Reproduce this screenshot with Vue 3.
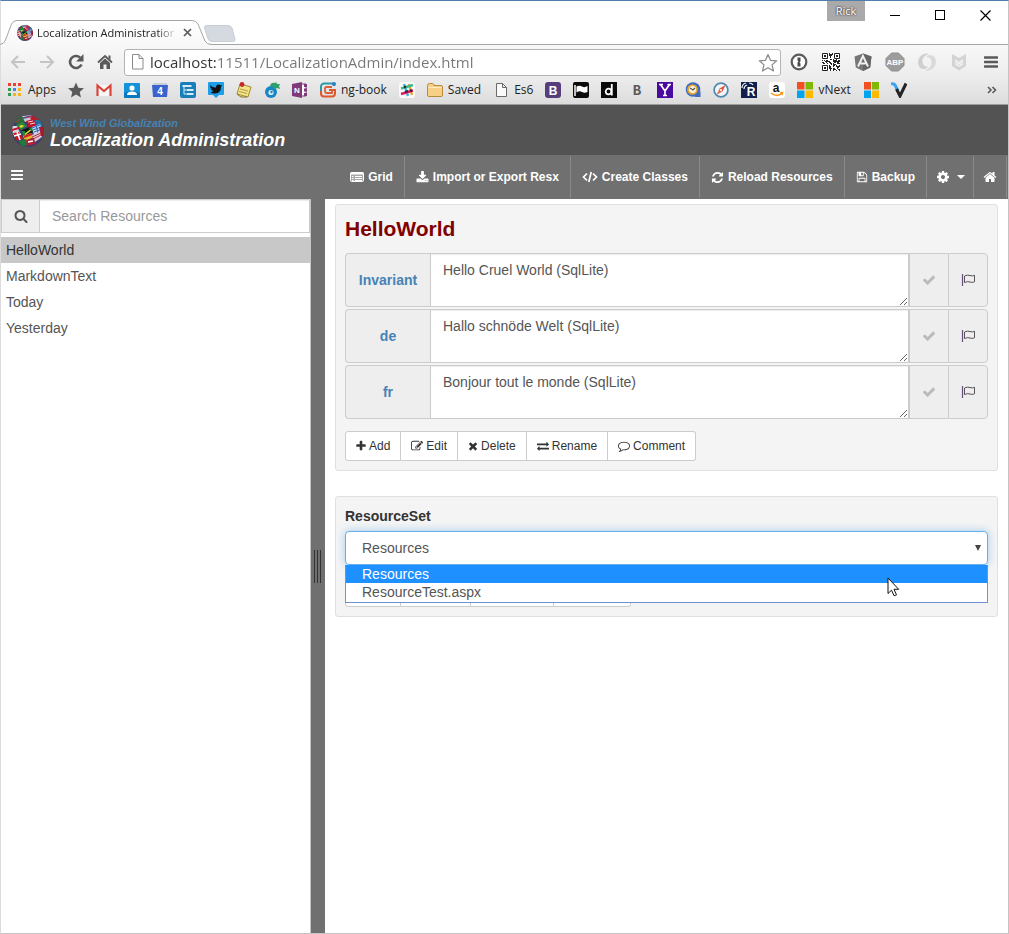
<script setup>
import { ref } from 'vue'

const fa = {
  bars: 'M1664 1344v128q0 26-19 45t-45 19H192q-26 0-45-19t-19-45v-128q0-26 19-45t45-19h1408q26 0 45 19t19 45zm0-512v128q0 26-19 45t-45 19H192q-26 0-45-19t-19-45V832q0-26 19-45t45-19h1408q26 0 45 19t19 45zm0-512v128q0 26-19 45t-45 19H192q-26 0-45-19t-19-45V320q0-26 19-45t45-19h1408q26 0 45 19t19 45z',
  search: 'M1216 832q0-185-131.5-316.5t-316.5-131.5-316.5 131.5-131.5 316.5 131.5 316.5 316.5 131.5 316.5-131.5 131.5-316.5zm512 832q0 52-38 90t-90 38q-54 0-90-38l-343-342q-179 124-399 124-143 0-273.5-55.5t-225-150-150-225-55.5-273.5 55.5-273.5 150-225 225-150 273.5-55.5 273.5 55.5 225 150 150 225 55.5 273.5q0 220-124 399l343 343q37 37 37 90z',
  plus: 'M1600 736v192q0 40-28 68t-68 28h-416v416q0 40-28 68t-68 28h-192q-40 0-68-28t-28-68v-416h-416q-40 0-68-28t-28-68v-192q0-40 28-68t68-28h416v-416q0-40 28-68t68-28h192q40 0 68 28t28 68v416h416q40 0 68 28t28 68z',
  check: 'M1671 566q0 40-28 68l-724 724-136 136q-28 28-68 28t-68-28l-136-136-362-362q-28-28-28-68t28-68l136-136q28-28 68-28t68 28l294 295 656-657q28-28 68-28t68 28l136 136q28 28 28 68z',
  times: 'M1490 1322q0 40-28 68l-136 136q-28 28-68 28t-68-28l-294-294-294 294q-28 28-68 28t-68-28l-136-136q-28-28-28-68t28-68l294-294-294-294q-28-28-28-68t28-68l136-136q28-28 68-28t68 28l294 294 294-294q28-28 68-28t68 28l136 136q28 28 28 68t-28 68l-294 294 294 294q28 28 28 68z',
  home: 'M1472 992v480q0 26-19 45t-45 19h-384v-384h-256v384h-384q-26 0-45-19t-19-45v-480q0-1 .5-3t.5-3l575-474 575 474q1 2 1 6zm223-69l-62 74q-8 9-21 11h-3q-13 0-21-7l-692-577-692 577q-12 8-24 7-13-2-21-11l-62-74q-8-10-7-23.5t11-21.5l719-599q32-26 76-26t76 26l244 204v-195q0-14 9-23t23-9h192q14 0 23 9t9 23v408l219 182q10 8 11 21.5t-7 23.5z',
  download: 'M1344 1344q0-26-19-45t-45-19-45 19-19 45 19 45 45 19 45-19 19-45zm256 0q0-26-19-45t-45-19-45 19-19 45 19 45 45 19 45-19 19-45zm128-224v320q0 40-28 68t-68 28h-1472q-40 0-68-28t-28-68v-320q0-40 28-68t68-28h465l135 136q58 56 136 56t136-56l136-136h464q40 0 68 28t28 68zm-325-569q17 41-14 70l-448 448q-18 19-45 19t-45-19l-448-448q-31-29-14-70 17-39 59-39h256v-448q0-26 19-45t45-19h256q26 0 45 19t19 45v448h256q42 0 59 39z',
  cog: 'M1152 896q0-106-75-181t-181-75-181 75-75 181 75 181 181 75 181-75 75-181zm512-109v222q0 12-8 23t-20 13l-185 28q-19 54-39 91 35 50 107 138 10 12 10 25t-9 23q-27 37-99 108t-94 71q-12 0-26-9l-138-108q-44 23-91 38-16 136-29 186-7 28-36 28h-222q-14 0-24.5-8.5t-11.5-21.5l-28-184q-49-16-90-37l-141 107q-10 9-25 9-14 0-25-11-126-114-165-168-7-10-7-23 0-12 8-23 15-21 51-66.5t54-70.5q-27-50-41-99l-183-27q-13-2-21-12.5t-8-23.5v-222q0-12 8-23t19-13l186-28q14-46 39-92-40-57-107-138-10-12-10-24 0-10 9-23 26-36 98.5-107.5t94.5-71.5q13 0 26 10l138 107q44-23 91-38 16-136 29-186 7-28 36-28h222q14 0 24.5 8.5t11.5 21.5l28 184q49 16 90 37l142-107q9-9 24-9 13 0 25 10 129 119 165 170 7 8 7 22 0 12-8 23-15 21-51 66.5t-54 70.5q26 50 41 98l183 28q13 2 21 12.5t8 23.5z',
  refresh: 'M1639 1056q0 5-1 7-64 268-268 434.5t-478 166.5q-146 0-282.5-55t-243.5-157l-129 129q-19 19-45 19t-45-19-19-45v-448q0-26 19-45t45-19h448q26 0 45 19t19 45-19 45l-137 137q71 66 161 102t187 36q134 0 250-65t186-179q11-17 53-117 8-23 30-23h192q13 0 22.5 9.5t9.5 22.5zm25-800v448q0 26-19 45t-45 19h-448q-26 0-45-19t-19-45 19-45l138-138q-148-137-349-137-134 0-250 65t-186 179q-11 17-53 117-8 23-30 23h-199q-13 0-22.5-9.5t-9.5-22.5v-7q65-268 270-434.5t480-166.5q146 0 284 55.5t245 156.5l130-129q19-19 45-19t45 19 19 45z',
  save: 'M512 1536h768v-384h-768v384zm896 0h128v-896q0-14-10-38.5t-20-34.5l-281-281q-10-10-34-20t-39-10v416q0 40-28 68t-68 28h-576q-40 0-68-28t-28-68v-416h-128v1280h128v-416q0-40 28-68t68-28h832q40 0 68 28t28 68v416zm-384-928v-320q0-13-9.5-22.5t-22.5-9.5h-192q-13 0-22.5 9.5t-9.5 22.5v320q0 13 9.5 22.5t22.5 9.5h192q13 0 22.5-9.5t9.5-22.5zm640 32v928q0 40-28 68t-68 28h-1344q-40 0-68-28t-28-68v-1344q0-40 28-68t68-28h928q40 0 88 20t76 48l280 280q28 28 48 76t20 88z',
  comment: 'M896 384q-204 0-381.5 69.5t-282 187.5-104.5 255q0 112 71.5 213.5t201.5 175.5l87 50-27 96q-24 91-70 172 152-63 275-171l43-38 57 6q69 8 130 8 204 0 381.5-69.5t282-187.5 104.5-255-104.5-255-282-187.5-381.5-69.5zm896 512q0 174-120 321.5t-326 233-450 85.5q-70 0-145-8-198 175-460 242-49 14-114 22h-5q-15 0-27-10.5t-16-27.5v-1q-3-4-.5-12t2-10 4.5-9.5l6-9 7-8.5 8-9q7-8 31-34.5t34.5-38 31-39.5 32.5-51 27-59 26-76q-157-89-247.5-220t-90.5-281q0-174 120-321.5t326-233 450-85.5 450 85.5 326 233 120 321.5z',
  edit: 'M888 1184l116-116-152-152-116 116v56h96v96h56zm440-720q-16-16-33 1l-350 350q-17 17-1 33t33-1l350-350q17-17 1-33zm80 594v190q0 119-84.5 203.5t-203.5 84.5h-832q-119 0-203.5-84.5t-84.5-203.5v-832q0-119 84.5-203.5t203.5-84.5h832q63 0 117 25 15 7 18 23 3 17-9 29l-49 49q-14 14-32 8-23-6-45-6h-832q-66 0-113 47t-47 113v832q0 66 47 113t113 47h832q66 0 113-47t47-113v-126q0-13 9-22l64-64q15-15 35-7t20 29zm-96-738l288 288-672 672h-288v-288zm444 132l-92 92-288-288 92-92q28-28 68-28t68 28l152 152q28 28 28 68t-28 68z',
  exchange: 'M1792 1184v192q0 13-9.5 22.5t-22.5 9.5h-1376v192q0 13-9.5 22.5t-22.5 9.5q-12 0-24-10l-319-320q-9-9-9-22 0-14 9-23l320-320q9-9 23-9 13 0 22.5 9.5t9.5 22.5v192h1376q13 0 22.5 9.5t9.5 22.5zm0-544q0 14-9 23l-320 320q-9 9-23 9-13 0-22.5-9.5t-9.5-22.5v-192h-1376q-13 0-22.5-9.5t-9.5-22.5v-192q0-13 9.5-22.5t22.5-9.5h1376v-192q0-14 9-23t23-9q12 0 24 10l319 319q9 9 9 23z'
}

const address = ref('localhost:11511/LocalizationAdmin/index.html')
const query = ref('')
const resources = ['HelloWorld', 'MarkdownText', 'Today', 'Yesterday']
const selected = ref('HelloWorld')
const locales = ref([
  { id: 'Invariant', text: 'Hello Cruel World (SqlLite)' },
  { id: 'de', text: 'Hallo schnöde Welt (SqlLite)' },
  { id: 'fr', text: 'Bonjour tout le monde (SqlLite)' }
])
const actions = [
  { label: 'Add', icon: 'plus', narrow: true },
  { label: 'Edit', icon: 'edit' },
  { label: 'Delete', icon: 'times', narrow: true },
  { label: 'Rename', icon: 'exchange' },
  { label: 'Comment', icon: 'comment' }
]
const sets = ['Resources', 'ResourceTest.aspx']
const currentSet = ref('Resources')
</script>

<template>
  <div class="window">
    <svg class="defs" aria-hidden="true">
      <defs>
        <clipPath id="ball"><circle cx="16" cy="16" r="16" /></clipPath>
        <symbol id="globe" viewBox="0 0 32 32">
          <g clip-path="url(#ball)">
            <rect width="32" height="32" fill="#3b3f6e" />
            <path d="M2 6l7-5 5 4-6 6z" fill="#2b6b3a" />
            <path d="M10 1l10-1 2 4-9 3z" fill="#c9c9d6" />
            <path d="M11 3l9-2" stroke="#2f4fa8" stroke-width="1.500" />
            <path d="M20 0l7 4-3 3-6-3z" fill="#b3202c" />
            <path d="M14 6l8-2 3 6-8 4z" fill="#c2102a" />
            <path d="M22 5l6 0 3 6-5 2z" fill="#286c9e" />
            <path d="M4 10l7-3 4 4-6 4z" fill="#2a8a3c" />
            <path d="M7 11l3-1 2 1-3 2z" fill="#f2d52c" />
            <path d="M0 11l5 0 3 7-7 2z" fill="#d8d8e2" />
            <path d="M0 14l7-2 0 2-7 2z" fill="#c4142c" />
            <path d="M10 15l8-3 3 5-9 4z" fill="#101a12" />
            <path d="M11 20l9-7 1 1-9 7z" fill="#f0dc2c" />
            <path d="M17 13l4-1 1 4-3 0zM10 16l3 0 0 5-2 0z" fill="#1d8a38" />
            <path d="M20 12l8-3 2 7-8 4z" fill="#c8dcf0" />
            <path d="M20 13l8-3M21 15l8-3M22 17l8-3M24 10l2 8" stroke="#2d62b8" stroke-width="1" />
            <path d="M1 18l6-1 4 7-6 2z" fill="#c91528" />
            <path d="M2 21l7-2M5 17l3 8" stroke="#fff" stroke-width="1.500" />
            <path d="M11 21l8-3 3 4-9 4z" fill="#e6b91e" />
            <path d="M12 22l8-3" stroke="#d4202c" stroke-width="2" />
            <path d="M20 20l9-4 1 6-7 5z" fill="#dfc6d2" />
            <path d="M20 22l9-4M21 24l8-4" stroke="#b4304a" />
            <path d="M6 26l8-2 2 5-5 3z" fill="#1f7a3e" />
            <path d="M14 25l8-2 1 6-8 2z" fill="#b81c34" />
            <path d="M16 27l5-1" stroke="#fff" stroke-width="1.500" />
            <path d="M27 12l5 0 0 9-3 0z" fill="#a61c2c" />
            <path d="M16 7l5-1M18 9l5-1" stroke="#f4d8dc" />
            <path d="M3 8l5-4M13 3l7-2" stroke="#c82a38" />
          </g>
        </symbol>
        <linearGradient id="tabFill" x1="0" y1="0" x2="0" y2="1">
          <stop offset="0" stop-color="#fff" />
          <stop offset="1" stop-color="#f8f8f8" />
        </linearGradient>
      </defs>
    </svg>

    <header class="chrome">
      <div class="strip">
        <div class="tab">
          <svg class="tab-shape" viewBox="0 0 212 25" aria-hidden="true">
            <path d="M0 25V24.500Q4 24 5.500 20L11.500 4Q13 .5 17 .5H192Q196 .5 198 4L205 21Q206.500 24.500 211 24.500V25z" fill="url(#tabFill)" />
            <path d="M0 24.500Q4 24 5.500 20L11.500 4Q13 .5 17 .5H192Q196 .5 198 4L205 21Q206.500 24.500 212 24.500" fill="none" stroke="#a6a6a6" />
          </svg>
          <svg class="favicon" aria-hidden="true"><use href="#globe" /></svg>
          <span class="tab-title">Localization Administration</span>
          <button class="plain tab-close" aria-label="Close tab">
            <svg width="9" height="9" viewBox="0 0 9 9"><path d="M1 1l7 7M8 1l-7 7" stroke="#5a5a5a" stroke-width="1.700" /></svg>
          </button>
        </div>
        <button class="plain new-tab" aria-label="New tab">
          <svg width="34" height="18" viewBox="0 0 34 18"><path d="M4 .5H25Q28 .5 29 3L32 14Q32.500 16.500 30 16.500H9Q6 16.500 5 14L1.500 3Q1 .5 4 .5z" fill="#d5dae1" stroke="#c9ced5" /></svg>
        </button>
        <span class="profile">Rick</span>
        <button class="plain win-btn" aria-label="Minimize"><svg width="11" height="11"><path d="M0 5.500h10" stroke="#000" /></svg></button>
        <button class="plain win-btn" aria-label="Maximize"><svg width="11" height="11"><rect x=".5" y=".5" width="9" height="9" fill="none" stroke="#000" /></svg></button>
        <button class="plain win-btn" aria-label="Close"><svg width="11" height="11"><path d="M.5 .5l10 10M10.500 .5l-10 10" stroke="#000" stroke-width="1.200" /></svg></button>
      </div>

      <div class="toolbar">
        <button class="plain nav-btn" aria-label="Back"><svg width="18" height="18" viewBox="0 0 18 18"><path d="M16 9H3M9 3L3 9l6 6" fill="none" stroke="#c4c4c4" stroke-width="2" /></svg></button>
        <button class="plain nav-btn" aria-label="Forward"><svg width="18" height="18" viewBox="0 0 18 18"><path d="M2 9h13M9 3l6 6-6 6" fill="none" stroke="#c4c4c4" stroke-width="2" /></svg></button>
        <button class="plain nav-btn" aria-label="Reload"><svg width="18" height="18" viewBox="0 0 18 18"><path d="M14.500 11.500A6 6 0 1 1 13 4.500" fill="none" stroke="#5a5a5a" stroke-width="2.600" /><path d="M16.500 1v7.500H9z" fill="#5a5a5a" /></svg></button>
        <button class="plain nav-btn" aria-label="Home"><svg width="18" height="18" viewBox="0 0 18 18"><path d="M2 9.500L9 3l7 6.500" fill="none" stroke="#5a5a5a" stroke-width="1.800" /><path d="M4 10l5-4.500 5 4.500v6h-3.500v-4.500h-3V16H4zM12.500 2.500h2v4.500l-2-2z" fill="#5a5a5a" /></svg></button>
        <div class="omnibox">
          <svg width="12" height="16" viewBox="0 0 12 16" aria-hidden="true"><path d="M.5 .5h6.500l4 4v10.500H.5zM7 .5v4h4" fill="#fff" stroke="#8a8a8a" /></svg>
          <input v-model="address" class="url" type="text" aria-label="Address" spellcheck="false" />
          <button class="plain" aria-label="Bookmark this page"><svg width="20" height="19" viewBox="0 0 20 19"><path d="M10 1.500l2.500 5.800 6.200.5-4.700 4.100 1.500 6.100L10 14.700 4.500 18 6 11.900 1.300 7.800l6.200-.5z" fill="#fff" stroke="#8a8a8a" stroke-width="1.200" stroke-linejoin="round" /></svg></button>
        </div>
        <div class="extensions">
          <button class="plain" aria-label="Password manager"><svg width="18" height="18" viewBox="0 0 18 18"><circle cx="9" cy="9" r="7.300" fill="#fff" stroke="#5a5a5a" stroke-width="2.200" /><path d="M7.500 4.500h3v4l-1 1 1 1v3h-3v-4l1-1-1-1z" fill="#4a4a4a" /></svg></button>
          <button class="plain" aria-label="QR code"><svg width="18" height="18" viewBox="0 0 18 18"><rect width="18" height="18" fill="#fff" /><path d="M.5.5h5v5h-5zM12.500.5h5v5h-5zM.5 12.500h5v5h-5z" fill="none" stroke="#222" /><path d="M2 2h2v2H2zM14 2h2v2h-2zM2 14h2v2H2zM7 0h1v1h2V0h1v2h-1v1H9v2H8V3H7zM8 6h2v1H8zM0 7h1v1H0zM2 7h1v1H2zM4 7h2v1h1v1H5v1H4V9H3V8h1zM0 9h2v1h1v1H1v-1H0zM11 6h1v1h2V6h1v2h1V7h2v2h-1v1h-2V9h-1v1h-2V9h-1zM7 8h1v1h1v1h1v2H9v-1H8v-1H7zM5 10h1v1H5zM7 12h1v1h1v2h1v1H9v2H8v-2H7zM11 10h1v1h2v1h-1v1h-1v1h-1zM14 12h1v1h2v-1h1v2h-1v1h-1v1h-1v-2h-1zM11 15h2v1h1v1h-2v1h-1zM16 16h2v2h-1v-1h-1zM14 17h1v1h-1zM15 10h3v1h-3z" fill="#222" /></svg></button>
          <button class="plain" aria-label="Angular"><svg width="18" height="18" viewBox="0 0 18 18"><path d="M9 .5l8.500 3-1.300 11L9 18l-7.200-3.500L.5 3.500z" fill="#777" /><path d="M9 .5l8.500 3-1.300 11L9 18z" fill="#666" /><path d="M4 13.500L9 3l5 10.500M6.500 10.500h5" fill="none" stroke="#f2f2f2" stroke-width="1.900" /></svg></button>
          <button class="plain" aria-label="Ad blocker"><svg width="20" height="20" viewBox="0 0 20 20"><path d="M6.500 1h7L19 6.500v7L13.500 19h-7L1 13.500v-7z" fill="#9c9c9c" stroke="#8c8c8c" /><text x="10" y="13" text-anchor="middle" class="abp">ABP</text></svg></button>
          <button class="plain" aria-label="Swirl"><svg width="20" height="20" viewBox="0 0 20 20"><path d="M7 17C0 17-1 7 5 3c2-1.500 5-2 7-1C7 3 4 8 6 12c1 2 3 3 5 2.500C10 16 9 17 7 17z" fill="#cfcfcf" /><path d="M13 3c7 0 8 10 2 14-2 1.500-5 2-7 1 5-1 8-6 6-10-1-2-3-3-5-2.500C10 4 11 3 13 3z" fill="#dadada" /></svg></button>
          <button class="plain" aria-label="Shield"><svg width="16" height="18" viewBox="0 0 16 18"><path d="M1 1l7 4 7-4v12l-7 4.500L1 13z" fill="#d4d4d4" /><path d="M4 6l4 3 4-3v5.500L8 14l-4-2.500z" fill="#f1f1f1" /><path d="M4 9l4 3 4-3" fill="none" stroke="#dcdcdc" /></svg></button>
          <button class="plain" aria-label="Menu"><svg width="14" height="14" viewBox="0 0 14 14"><path d="M1 2.500h12M1 7h12M1 11.500h12" stroke="#5a5a5a" stroke-width="2.600" stroke-linecap="round" /></svg></button>
        </div>
      </div>

      <nav class="bookmarks">
        <a href="#"><svg class="bm" viewBox="0 0 16 16"><path d="M1 1h3v3H1zM6 1h3v3H6zM11 1h3v3h-3z" fill="#ea3e30" /><path d="M1 6h3v3H1z" fill="#2f9e52" /><path d="M6 6h3v3H6z" fill="#3d87f0" /><path d="M11 6h3v3h-3zM6 11h3v3H6zM11 11h3v3h-3z" fill="#f5b419" /><path d="M1 11h3v3H1z" fill="#2f9e52" /></svg>Apps</a>
        <a href="#" aria-label="Starred"><svg class="bm" viewBox="0 0 16 16"><path d="M8 .5l2.300 5.200 5.700.5-4.300 3.800L13 15.500 8 12.500l-5 3L4.300 10 0 6.200l5.700-.5z" fill="#5a5a5a" /></svg></a>
        <a href="#" aria-label="Mail"><svg class="bm" viewBox="0 0 16 16"><path d="M1 3h14v11H1z" fill="#f6f6f6" /><path d="M1.500 14V3.500L8 9l6.500-5.500V14" fill="none" stroke="#d8453a" stroke-width="2.200" /></svg></a>
        <a href="#" aria-label="Contacts"><svg class="bm" viewBox="0 0 16 16"><rect y="1" width="16" height="15" rx="1" fill="#1593d8" /><path d="M0 11l8-2 8 2v4a1 1 0 0 1-1 1H1a1 1 0 0 1-1-1z" fill="#0a78bc" /><circle cx="8" cy="6" r="2.600" fill="#fff" /><path d="M3 13q0-3.500 5-3.500t5 3.500z" fill="#fff" /></svg></a>
        <a href="#" aria-label="Calendar"><svg class="bm" viewBox="0 0 16 16"><path d="M1 1h14v3H1z" fill="#c9cdd6" /><path d="M0 3h16l-1 12H1z" fill="#3a63d0" /><text x="8" y="12.500" text-anchor="middle" class="glyph sm">4</text></svg></a>
        <a href="#" aria-label="Tasks"><svg class="bm" viewBox="0 0 16 16"><rect width="16" height="16" rx="2" fill="#1a7fb8" /><path d="M2.500 4h9M7 8h6.500M7 12h6.500" stroke="#d6ecf8" stroke-width="2" /><path d="M4 4v8h3M4 8h3" stroke="#d6ecf8" fill="none" /></svg></a>
        <a href="#" aria-label="Twitter client"><svg class="bm" viewBox="0 0 16 16"><path d="M1 0h14a1 1 0 0 1 1 1v11a1 1 0 0 1-1 1h-4l-3 3-3-3H1a1 1 0 0 1-1-1V1a1 1 0 0 1 1-1z" fill="#1c9fe8" /><path d="M2 3q3 3 6 2.500Q8 2.500 10.500 2.500q1.200 0 1.800.8L14 3l-1 1.700Q13 11 7 11.500 4 11.500 2.500 10q2 0 3-1-2-.5-2.500-2H4Q2 6 2 3z" fill="#111" /></svg></a>
        <a href="#" aria-label="Notes"><svg class="bm" viewBox="0 0 16 16"><path d="M4 2l11 3-3 10-11-3z" fill="#f3e38a" stroke="#a58b2a" /><path d="M4 7l8 2M3 9.500l8 2" stroke="#b59d44" /><circle cx="6" cy="2.500" r="2.400" fill="#c62828" /><path d="M1 12l4 3 6 0" stroke="#8a7220" fill="none" /></svg></a>
        <a href="#" aria-label="Blog"><svg class="bm" viewBox="0 0 16 16"><circle cx="7" cy="10" r="6" fill="#1786c8" /><circle cx="7" cy="10.500" r="2.600" fill="#dcecf2" /><circle cx="7.500" cy="10" r="1.200" fill="#1786c8" /><path d="M6 4q1-4 5-3l1-1 1 2 3 0-1 2 1 3-3-1-2 1-2-2z" fill="#2f9e6a" /></svg></a>
        <a href="#" aria-label="OneNote"><svg class="bm" viewBox="0 0 16 16"><path d="M8 2h6v12H8z" fill="#fff" stroke="#80397b" /><path d="M12 2h3v3h-3zM12 6.500h3v3h-3zM12 11h3v3h-3z" fill="#80397b" /><path d="M0 2l10-2v16L0 14z" fill="#80397b" /><text x="5" y="11" text-anchor="middle" class="glyph xs">N</text></svg></a>
        <a href="#"><svg class="bm" viewBox="0 0 16 16"><path d="M14 4V3a2 2 0 0 0-2-1.500H4A3 3 0 0 0 1 4.500v7" fill="none" stroke="#2a9aa8" stroke-width="2" /><path d="M1 9v2.500a3 3 0 0 0 3 3h8a3 3 0 0 0 3-3V8H9" fill="none" stroke="#e0562e" stroke-width="2" /><path d="M12 5H6.500Q5 5 5 6.500v3Q5 11 6.500 11H12V8" fill="none" stroke="#d8603a" stroke-width="1.800" /><circle cx="14" cy="2" r="2" fill="#2d7fc8" /></svg>ng-book</a>
        <a href="#" aria-label="Slack"><svg class="bm" viewBox="0 0 16 16"><rect width="16" height="16" rx="3" fill="#fafafa" /><path d="M5 2l4 12" stroke="#3fb6e0" stroke-width="2.400" /><path d="M10 2l3 11" stroke="#e8a723" stroke-width="2.400" /><path d="M2 6.500l12-3.500" stroke="#3eb890" stroke-width="2.400" /><path d="M2 12l12-3.500" stroke="#e01765" stroke-width="2.400" /><path d="M5 4.500l2 1M6 10l3-1M11 8l2 1" stroke="#2b2b2b" stroke-width="2" /></svg></a>
        <a href="#"><svg class="bm" viewBox="0 0 16 16"><path d="M.5 3.500q0-2 2-2h3q1.500 0 1.500 2h7q1.500 0 1.500 1.500v8q0 1.500-1.500 1.500H2q-1.500 0-1.500-1.500z" fill="#f7cf85" stroke="#b98a3c" /><path d="M1.500 5.500h13" stroke="#fdeac4" /></svg>Saved</a>
        <a href="#"><svg class="bm" viewBox="0 0 16 16"><path d="M3.500 1.500h6l4 4v9h-10zM9.500 1.500v4h4" fill="#fafafa" stroke="#6a6a6a" /></svg>Es6</a>
        <a href="#" aria-label="Bootstrap"><svg class="bm" viewBox="0 0 16 16"><rect width="16" height="16" rx="3" fill="#563d7c" /><text x="8" y="12.500" text-anchor="middle" class="glyph">B</text></svg></a>
        <a href="#" aria-label="Font Awesome"><svg class="bm" viewBox="0 0 16 16"><rect width="16" height="16" rx="2" fill="#0c0c0c" /><path d="M2 3v11" stroke="#fff" stroke-width="1.500" /><path d="M3.500 4.500q3-1.500 5.500 0t5.500-.5v6q-3 1.500-5.500 0t-5.500.5z" fill="#fff" /></svg></a>
        <a href="#" aria-label="Devdocs"><svg class="bm" viewBox="0 0 16 16"><rect width="16" height="16" fill="#0a0a0a" /><circle cx="7.500" cy="9.500" r="2.800" fill="none" stroke="#fff" stroke-width="1.700" /><path d="M10.800 2v11.500" stroke="#fff" stroke-width="1.800" /></svg></a>
        <a href="#" aria-label="Bold B"><svg class="bm" viewBox="0 0 16 16"><text x="8" y="13" text-anchor="middle" class="serif-b">B</text></svg></a>
        <a href="#" aria-label="Yahoo"><svg class="bm" viewBox="0 0 16 16"><rect width="16" height="16" fill="#4a0aa0" /><path d="M3.500 2.500L8 9l4.500-6.500M8 9v5M6 13.500h4M2 2.500h4M10.500 2.500h3.500" fill="none" stroke="#fff" stroke-width="1.700" /></svg></a>
        <a href="#" aria-label="Calendar clock"><svg class="bm" viewBox="0 0 16 16"><circle cx="8" cy="7.500" r="7.300" fill="#3f6cc0" /><circle cx="7.500" cy="7.500" r="4.500" fill="#fbf2d8" stroke="#e8a42c" stroke-width="1.700" /><path d="M5 6l3 2 2-2" stroke="#5a5a5a" fill="none" stroke-width="1.300" /><path d="M15.500 9v6h-6z" fill="#3f6cc0" /></svg></a>
        <a href="#" aria-label="Safari"><svg class="bm" viewBox="0 0 16 16"><circle cx="8" cy="8" r="6.900" fill="#f3f6f8" stroke="#4f88b0" stroke-width="1.700" /><path d="M12.500 3L9.500 9.500l-3-3z" fill="#e05040" /><path d="M3.500 13l3-6.500 3 3z" fill="#d9705c" /><circle cx="8" cy="8" r="1" fill="#fff" /></svg></a>
        <a href="#" aria-label="Radio"><svg class="bm" viewBox="0 0 16 16"><rect width="16" height="16" fill="#10204a" /><text x="10" y="14" text-anchor="middle" class="glyph">R</text><path d="M1 6q0-4 4-5M3 7q0-3 3-4M8 1q3 0 4 2" stroke="#e8ecf4" fill="none" stroke-width="1.200" /></svg></a>
        <a href="#" aria-label="Amazon"><svg class="bm" viewBox="0 0 16 16"><rect width="16" height="16" rx="3" fill="#fff" /><text x="7" y="9.500" text-anchor="middle" class="glyph dark">a</text><path d="M2 11q6 4.500 11 .5M11 11l2.500-.5-.5 2.500" fill="none" stroke="#f7981f" stroke-width="1.500" /></svg></a>
        <a href="#"><svg class="bm" viewBox="0 0 16 16"><path d="M0 0h7.500v7.500H0z" fill="#f25022" /><path d="M8.500 0H16v7.500H8.500z" fill="#7fba00" /><path d="M0 8.500h7.500V16H0z" fill="#00a4ef" /><path d="M8.500 8.500H16V16H8.500z" fill="#ffb900" /></svg>vNext</a>
        <a href="#" aria-label="Microsoft"><svg class="bm" viewBox="0 0 16 16"><path d="M1 0h7v7.500H1z" fill="#f25022" /><path d="M9 0h7v7.500H9z" fill="#7fba00" /><path d="M1 8.500h7V16H1z" fill="#00a4ef" /><path d="M9 8.500h7V16H9z" fill="#ffb900" /></svg></a>
        <a href="#" aria-label="V"><svg class="bm" viewBox="0 0 16 16"><path d="M0 2q3-1 4 1l3 6" stroke="#3aa4f0" stroke-width="3" fill="none" /><path d="M5.500 7L9 14l6-12.500" stroke="#242424" stroke-width="3" fill="none" /></svg></a>
        <button class="plain more" aria-label="More bookmarks"><svg width="10" height="8" viewBox="0 0 10 8"><path d="M1 1l3 3-3 3M5.500 1l3 3-3 3" fill="none" stroke="#5a5a5a" stroke-width="1.600" /></svg></button>
      </nav>
    </header>

    <div class="banner">
      <svg class="logo" aria-hidden="true"><use href="#globe" /></svg>
      <div class="titles">
        <div class="brand">West Wind Globalization</div>
        <h1>Localization Administration</h1>
      </div>
    </div>

    <nav class="menu">
      <button class="plain toggle" aria-label="Toggle list"><svg class="fa lg" viewBox="0 0 1792 1792"><path :d="fa.bars" /></svg></button>
      <a href="#"><svg width="14" height="12" viewBox="0 0 14 12"><rect x=".5" y="1.500" width="13" height="9" rx="1" fill="#a9a9a9" stroke="#fff" /><path d="M.5 2.500h13" stroke="#fff" stroke-width="2" /><path d="M2 5.500h1.500M5 5.500h7M2 7.500h1.500M5 7.500h7M2 9.500h1.500M5 9.500h7" stroke="#fff" /></svg>Grid</a>
      <a href="#"><svg class="fa md" viewBox="0 0 1792 1792"><path :d="fa.download" /></svg>Import or Export Resx</a>
      <a href="#"><svg width="16" height="12" viewBox="0 0 16 12"><path d="M5 2.500L1.500 6 5 9.500M11 2.500L14.500 6 11 9.500M9.200 1L6.800 11" fill="none" stroke="#fff" stroke-width="1.700" /></svg>Create Classes</a>
      <a href="#"><svg class="fa md" viewBox="0 0 1792 1792"><path :d="fa.refresh" /></svg>Reload Resources</a>
      <a href="#"><svg class="fa" viewBox="0 0 1792 1792"><path :d="fa.save" /></svg>Backup</a>
      <a href="#" class="settings" aria-label="Settings"><svg class="fa lg" viewBox="0 0 1792 1792"><path :d="fa.cog" /></svg><span class="caret"></span></a>
      <a href="#" class="house" aria-label="Home"><svg class="fa lg" viewBox="0 0 1792 1792"><path :d="fa.home" /></svg></a>
    </nav>

    <div class="body">
      <aside class="sidebar">
        <div class="search">
          <label for="search" aria-label="Search"><svg class="fa lg" viewBox="0 0 1792 1792"><path :d="fa.search" /></svg></label>
          <input id="search" v-model="query" type="text" placeholder="Search Resources" />
        </div>
        <ul class="list">
          <li v-for="name in resources" :key="name">
            <a href="#" :class="{ active: name === selected }" @click.prevent="selected = name">{{ name }}</a>
          </li>
        </ul>
      </aside>

      <div class="splitter"><span class="grip"></span></div>

      <main class="content">
        <section class="panel">
          <h2>{{ selected }}</h2>
          <div v-for="loc in locales" :key="loc.id" class="locale">
            <label :for="'loc-' + loc.id">{{ loc.id }}</label>
            <textarea :id="'loc-' + loc.id" v-model="loc.text" spellcheck="false"></textarea>
            <button class="save" :aria-label="'Save ' + loc.id"><svg class="fa lg" viewBox="0 0 1792 1792"><path :d="fa.check" /></svg></button>
            <button class="flag" :aria-label="'Translate ' + loc.id">
              <svg width="15" height="14" viewBox="0 0 15 14"><path d="M1.500 1v12" stroke="#6d4a80" stroke-width="1.200" /><path d="M3.500 3q3-1.500 5.500-.5t4.500-.2v6.500q-2.500 1.200-4.500.2t-5.500.5z" fill="none" stroke="#555" /></svg>
            </button>
          </div>
          <div class="buttons">
            <button v-for="a in actions" :key="a.label">
              <svg class="fa" :class="{ narrow: a.narrow }" :viewBox="a.narrow ? '149 0 1493 1792' : '0 0 1792 1792'"><path :d="fa[a.icon]" /></svg>{{ a.label }}
            </button>
          </div>
        </section>

        <section class="panel">
          <label class="set-label" for="set">ResourceSet</label>
          <div class="select">
            <select id="set" v-model="currentSet">
              <option v-for="s in sets" :key="s">{{ s }}</option>
            </select>
            <svg class="arrow" width="6" height="6" viewBox="0 0 6 6" aria-hidden="true"><path d="M0 0h6L3 6z" fill="#444" /></svg>
            <ul class="options">
              <li v-for="s in sets" :key="s" :class="{ active: s === currentSet }">{{ s }}</li>
            </ul>
            <svg class="pointer" width="13" height="20" viewBox="0 0 13 20" aria-hidden="true"><path d="M1 1v15.500l3.500-3.300 2.600 5.600 2.400-1-2.500-5.500h4.700z" fill="#fff" stroke="#111" /></svg>
          </div>
          <div class="buttons set-buttons">
            <button class="w-add" aria-label="Add set"></button>
            <button class="w-delete" aria-label="Delete set"></button>
            <button class="w-rename" aria-label="Rename set"></button>
            <button class="w-import" aria-label="Import set"></button>
          </div>
        </section>
      </main>
    </div>
  </div>
</template>

<style>
body {
  margin: 0;
  background: #fff;
}
</style>

<style scoped>
* {
  box-sizing: border-box;
}
.window {
  display: flex;
  flex-direction: column;
  min-height: 100vh;
  border: 1px solid #c4c4c4;
  border-top-color: #4f7dac;
  border-left-color: #dcdcdc;
  font: 14px/20px "Liberation Sans", Arial, sans-serif;
  color: #333;
}
.defs {
  position: absolute;
  width: 0;
  height: 0;
}
.plain {
  display: flex;
  align-items: center;
  justify-content: center;
  padding: 0;
  border: 0;
  background: none;
}
svg {
  flex: none;
}
a {
  color: inherit;
  text-decoration: none;
}
h1, h2, ul {
  margin: 0;
  padding: 0;
  list-style: none;
}
.fa {
  width: 12px;
  height: 12px;
  fill: currentColor;
}
.fa.md {
  width: 13px;
  height: 13px;
}
.fa.lg {
  width: 14px;
  height: 14px;
}
.fa.narrow {
  width: 10px;
}

/* Browser frame */
.chrome {
  font: 12px/16px "Open Sans", "Noto Sans", sans-serif;
  color: #222;
}
.strip {
  display: flex;
  align-items: flex-start;
  height: 44px;
  background: linear-gradient(#a6a6a6, #a6a6a6) bottom / 100% 1px no-repeat;
}
.tab {
  position: relative;
  display: flex;
  align-items: center;
  align-self: flex-end;
  width: 202px;
  height: 25px;
  padding: 0 8px 0 16px;
}
.tab-shape {
  position: absolute;
  left: -1px;
  bottom: 0;
  width: 212px;
  height: 25px;
}
.favicon, .tab-title, .tab-close {
  position: relative;
}
.favicon {
  width: 16px;
  height: 16px;
  margin-right: 4px;
}
.tab-title {
  width: 137px;
  overflow: hidden;
  font-size: 11px;
  white-space: nowrap;
  mask-image: linear-gradient(to right, #000 120px, transparent 140px);
}
.tab-close {
  margin-left: 9px;
}
.new-tab {
  margin-top: 24px;
}
.profile {
  width: 38px;
  height: 20px;
  margin: 0 8px 0 auto;
  background: #aaa;
  color: #fff;
  font-size: 11px;
  line-height: 20px;
  text-align: center;
  text-shadow: 0 0 2px #333, 0 0 2px #555;
}
.win-btn {
  width: 45px;
  height: 28px;
}
.toolbar {
  display: flex;
  align-items: center;
  height: 33px;
  padding: 1px 1px 0 2px;
  background: linear-gradient(#f8f8f8, #ececec);
}
.nav-btn {
  width: 29px;
  height: 29px;
}
.omnibox {
  display: flex;
  flex: 1;
  align-items: center;
  gap: 6px;
  height: 27px;
  margin: 0 2px 0 5px;
  padding: 0 2px 0 7px;
  border: 1px solid #b4b4b4;
  border-radius: 3px;
  background: #fff;
}
.url {
  flex: 1;
  min-width: 0;
  height: 24px;
  padding: 0;
  border: 0;
  outline: 0;
  background: linear-gradient(to right, #333 67px, #777 67px);
  background-clip: text;
  color: transparent;
  font: 15px/24px "Open Sans", "Noto Sans", sans-serif;
}
.extensions {
  display: flex;
}
.extensions button {
  width: 32px;
  height: 28px;
}
.abp {
  fill: #fff;
  font: bold 8px "Liberation Sans", sans-serif;
}
.bookmarks {
  display: flex;
  align-items: center;
  gap: 12px;
  height: 27px;
  padding: 0 11px 2px 6px;
  border-bottom: 1px solid #9c9c9c;
  background: linear-gradient(#ececec, #dcdcdc);
}
.bookmarks a {
  display: flex;
  align-items: center;
  gap: 5px;
}
.bm {
  width: 16px;
  height: 16px;
}
.more {
  margin-left: auto;
}
.glyph {
  fill: #fff;
  font: bold 12px "Liberation Sans", sans-serif;
}
.glyph.sm {
  font-size: 10px;
}
.glyph.xs {
  font-size: 8px;
}
.glyph.dark {
  fill: #111;
}
.serif-b {
  fill: #5a5a5a;
  font: bold 14px "Liberation Mono", monospace;
}

/* Application header */
.banner {
  display: flex;
  align-items: center;
  gap: 6px;
  height: 50px;
  padding: 2px 10px 0 11px;
  background: #535353;
  font-weight: bold;
  font-style: italic;
}
.logo {
  width: 32px;
  height: 32px;
}
.titles {
  padding-top: 4px;
}
.brand {
  color: #4682b4;
  font-size: 11px;
  line-height: 13px;
}
h1 {
  color: #fff;
  font-size: 18px;
  line-height: 20px;
}
.menu {
  display: flex;
  align-items: stretch;
  height: 44px;
  padding-right: 1px;
  background: #707070;
  color: #fff;
  font-size: 12px;
  font-weight: bold;
}
.menu .toggle {
  margin: 0 auto 4px 9px;
  color: #fff;
}
.menu a {
  display: flex;
  align-items: center;
  gap: 4px;
  margin: 1px 0;
  padding: 0 11px;
  border-right: 1px solid #8a8a8a;
  white-space: nowrap;
}
.menu .settings {
  gap: 7px;
  padding: 0 8px 0 9px;
}
.menu .house {
  padding: 0 9px;
}
.caret {
  border: 4px solid transparent;
  border-top-color: #fff;
  border-bottom: 0;
}

/* Two-pane body */
.body {
  display: flex;
  flex: 1;
}
.sidebar {
  width: 309px;
  background: #fff;
}
.search {
  display: flex;
  height: 34px;
  border: 1px solid #ccc;
}
.search label {
  display: flex;
  align-items: center;
  justify-content: center;
  width: 38px;
  border-right: 1px solid #ccc;
  background: #eee;
  color: #555;
}
.search input {
  flex: 1;
  min-width: 0;
  padding: 0 12px;
  border: 0;
  outline: 0;
  box-shadow: inset 0 1px 1px rgba(0, 0, 0, 0.075);
  font: inherit;
}
.search input::placeholder {
  color: #999;
}
.list {
  margin-top: 4px;
}
.list a {
  display: block;
  padding: 3px 5px;
  color: #555;
}
.list a.active {
  background: #c8c8c8;
  color: #333;
}
.splitter {
  display: flex;
  align-items: center;
  justify-content: center;
  width: 15px;
  padding-right: 2px;
  border-left: 1px solid #c4c4c4;
  background: #707070;
}
.grip {
  width: 7px;
  height: 33px;
  background: repeating-linear-gradient(to right, #333 0 1px, #707070 1px 3px);
}
.content {
  flex: 1;
  padding: 5px 10px;
}
.panel {
  margin-bottom: 25px;
  padding: 9px;
  border: 1px solid #e0e0e0;
  border-radius: 3px;
  background: #f4f4f4;
}
h2 {
  margin-bottom: 9px;
  color: #800000;
  font-size: 21px;
  line-height: 30px;
}
.locale {
  display: flex;
  height: 54px;
  margin-bottom: 2px;
}
.locale label, .locale button {
  display: flex;
  align-items: center;
  justify-content: center;
  padding: 0;
  border: 1px solid #ccc;
  background: #eee;
}
.locale label {
  width: 85px;
  border-right: 0;
  border-radius: 4px 0 0 4px;
  color: #4682b4;
  font-weight: bold;
}
.locale textarea {
  flex: 1;
  min-width: 0;
  margin: 0;
  padding: 6px 12px;
  border: 1px solid #ccc;
  outline: 0;
  box-shadow: inset 0 1px 1px rgba(0, 0, 0, 0.075);
  color: #555;
  font: inherit;
  resize: vertical;
}
.locale .save {
  width: 39px;
  border-right: 0;
  color: #bbb;
}
.locale .flag {
  width: 40px;
  border-radius: 0 4px 4px 0;
}
.buttons {
  display: flex;
  margin-top: 12px;
}
.buttons button {
  display: flex;
  align-items: center;
  gap: 3px;
  height: 30px;
  padding: 0 10px;
  border: 1px solid #ccc;
  border-left: 0;
  background: #fff;
  color: #333;
  font: 12px/18px "Liberation Sans", Arial, sans-serif;
}
.buttons button:first-child {
  border-left: 1px solid #ccc;
  border-radius: 3px 0 0 3px;
}
.buttons button:last-child {
  border-radius: 0 3px 3px 0;
}
.set-label {
  display: block;
  margin-bottom: 5px;
  font-weight: bold;
}
.select {
  position: relative;
}
select {
  display: block;
  width: 100%;
  height: 34px;
  padding: 0 16px;
  border: 1px solid #66afe9;
  border-radius: 4px;
  outline: 0;
  background: #fff;
  box-shadow: 0 0 8px rgba(102, 175, 233, 0.6);
  color: #555;
  font: inherit;
  appearance: none;
}
.arrow {
  position: absolute;
  top: 14px;
  right: 7px;
}
.options {
  position: absolute;
  top: 34px;
  left: 0;
  right: 0;
  padding-bottom: 1px;
  border: 1px solid #6f93d2;
  border-top: 0;
  background: #fff;
  color: #555;
}
.options li {
  padding: 0 16px;
  line-height: 18px;
}
.options .active {
  background: #1e90ff;
  color: #fff;
}
.pointer {
  position: absolute;
  top: 46px;
  right: 88px;
}
.set-buttons {
  margin-top: 12px;
}
.w-add {
  width: 56px;
}
.w-delete {
  width: 70px;
}
.w-rename {
  width: 83px;
}
.w-import {
  width: 77px;
}
</style>
